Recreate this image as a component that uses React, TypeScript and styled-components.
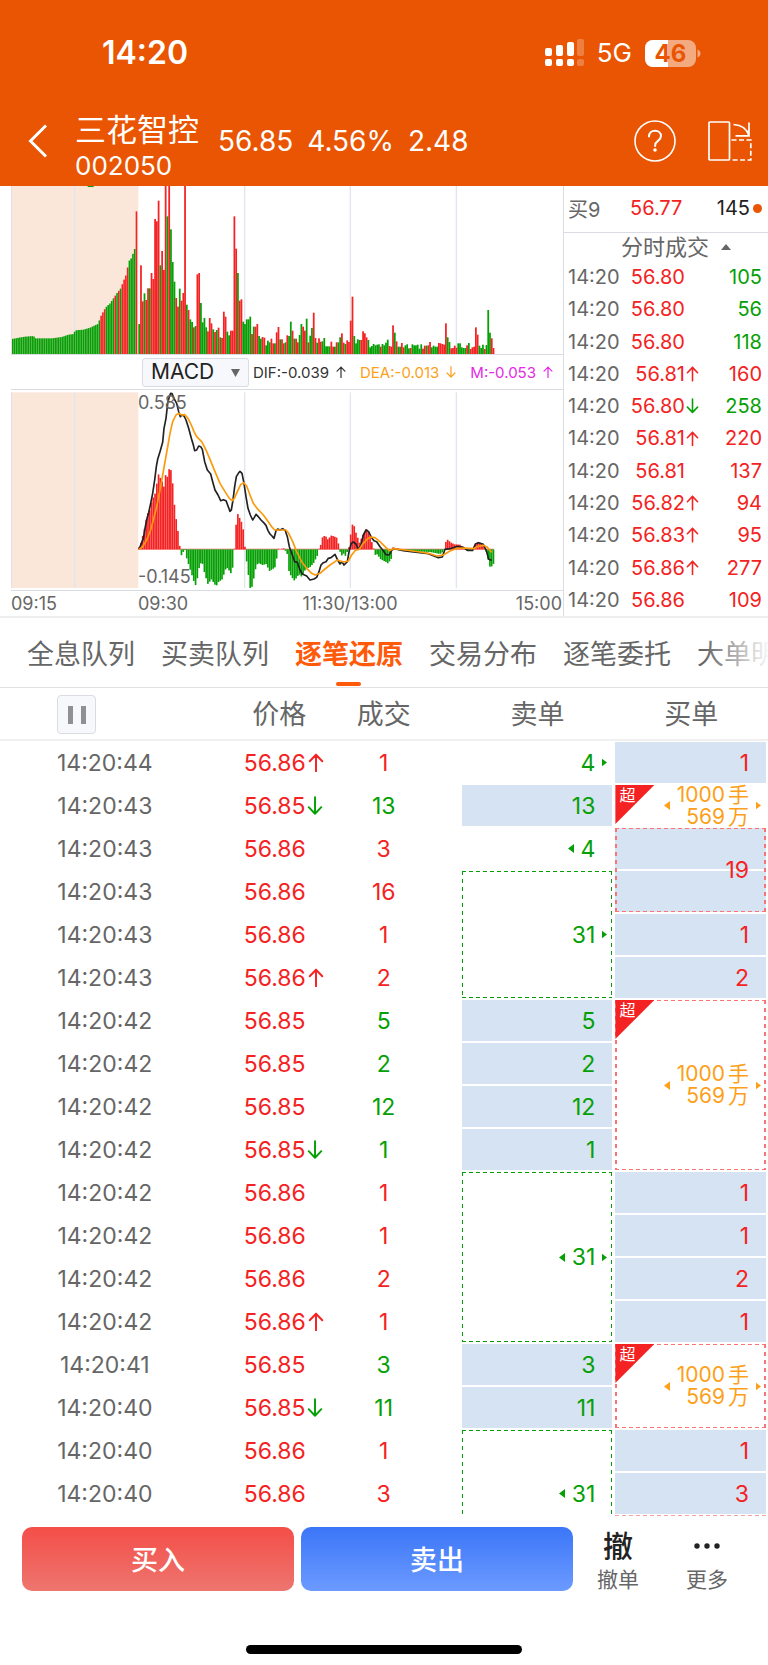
import React from "react";
import styled, { createGlobalStyle, css } from "styled-components";

const RED = "#f42222";
const GREEN = "#06a006";
const AMBER = "#fd9f18";
const BRAND = "#e95503";
const CELL = "#d6e3f3";
const LINE = "#dadce3";
const ROW = 43;

const GlobalStyle = createGlobalStyle`
  *, *::before, *::after { box-sizing: border-box; }
  body {
    margin: 0;
    background: #fff;
    color: #666;
    font-family: Inter, "Noto Sans CJK SC", sans-serif;
  }
  button, select { font: inherit; color: inherit; }
  h1, h2, p { margin: 0; font-weight: 400; }
  table { border-collapse: collapse; border-spacing: 0; }
  th, td { padding: 0; font-weight: 400; }
`;

/* ---------- header ---------- */

const Header = styled.header`
  background: ${BRAND};
  color: #fff;
  padding-bottom: 8px;
`;

const StatusBar = styled.div`
  display: flex;
  justify-content: space-between;
  align-items: center;
  height: 104px;
  padding: 2px 67px 0 102px;
`;

const Clock = styled.time`
  font-size: 32px;
  font-weight: 600;
  line-height: 40px;
`;

const StatusIcons = styled.div`
  display: flex;
  align-items: center;
  gap: 13px;
`;

const Network = styled.span`
  font-size: 26px;
  line-height: 28px;
`;

const TitleBar = styled.div`
  display: flex;
  align-items: center;
  height: 74px;
  padding: 0 16px 0 28px;
`;

const IconButton = styled.button`
  display: flex;
  padding: 0;
  border: 0;
  background: none;
  cursor: pointer;
`;

const StockName = styled.div`
  margin: 0 19px 0 27px;
`;

const Name = styled.h1`
  font-size: 31px;
  line-height: 50px;
`;

const Code = styled.p`
  font-size: 26px;
  line-height: 22px;
`;

const Quote = styled.div`
  display: flex;
  gap: 14px;
  font-size: 28px;
  line-height: 34px;
`;

const Actions = styled.div`
  display: flex;
  align-items: center;
  gap: 32px;
  margin-left: auto;
`;

/* ---------- charts ---------- */

const Market = styled.section`
  display: grid;
  grid-template-columns: minmax(0, 563fr) minmax(0, 205fr);
  border-bottom: 2px solid #eeeeef;
`;

const Charts = styled.div`
  display: flex;
  flex-direction: column;
  padding-left: 11px;
`;

const Plot = styled.div`
  position: relative;
  border-bottom: 1px solid ${LINE};

  svg { display: block; width: 100%; }
`;

const IndicatorBar = styled.div`
  display: flex;
  align-items: center;
  height: 35px;
  padding: 0 10px 0 131px;
  border-bottom: 1px solid ${LINE};
  font-size: 15px;
  white-space: nowrap;
`;

const SelectWrap = styled.label`
  position: relative;
  flex: none;
  margin-right: 4px;

  svg { position: absolute; right: 9px; top: 11px; pointer-events: none; }
`;

const IndicatorSelect = styled.select`
  appearance: none;
  display: block;
  width: 107px;
  height: 29px;
  padding: 0 8px;
  border: 1px solid ${LINE};
  border-radius: 3px;
  background: #f7f8fb;
  color: #222;
  font-size: 21px;
  line-height: 24px;
`;

const Readings = styled.div`
  display: flex;
  flex: 1;
  justify-content: space-between;
`;

const Reading = styled.span<{ $color: string }>`
  display: flex;
  align-items: center;
  gap: 7px;
  color: ${(p) => p.$color};
`;

const AxisValue = styled.span<{ $edge: "top" | "bottom" }>`
  position: absolute;
  left: 23%;
  ${(p) => p.$edge}: 3px;
  font-size: 18px;
  line-height: 20px;
`;

const TimeAxis = styled.div`
  display: grid;
  grid-template-columns: 127fr 424fr;
  padding-right: 1px;
  font-size: 18px;
  line-height: 25px;
`;

const Session = styled.div`
  display: grid;
  grid-template-columns: 1fr auto 1fr;

  span:last-child { text-align: right; }
`;

/* ---------- trade tape ---------- */

const Tape = styled.aside`
  display: flex;
  flex-direction: column;
  border-left: 1px solid ${LINE};
`;

const Level = styled.div`
  display: grid;
  grid-template-columns: 59px 1fr auto 9px;
  align-items: center;
  column-gap: 3px;
  height: 47px;
  padding: 0 6px 2px 4px;
  border-bottom: 1px solid ${LINE};
  font-size: 20px;
`;

const Up = styled.span`
  color: ${RED};
`;

const Strong = styled.span`
  color: #222;
`;

const Dot = styled.i`
  width: 9px;
  height: 9px;
  border-radius: 50%;
  background: ${BRAND};
`;

const TapeTitle = styled.h2`
  display: flex;
  align-items: center;
  justify-content: center;
  gap: 12px;
  height: 28px;
  padding-left: 20px;
  font-size: 22px;
  line-height: 28px;
`;

const TapeTable = styled.table`
  flex: 1;
  width: 100%;
  height: 355px;
  table-layout: fixed;
  font-size: 20px;
  line-height: 24px;
`;

const TapeTime = styled.td`
  width: 59px;
  padding-left: 4px;
`;

const TapePrice = styled.td`
  width: 76px;
  color: ${RED};
`;

const TapeVolume = styled.td<{ $color: string }>`
  padding-right: 6px;
  text-align: right;
  color: ${(p) => p.$color};
`;

const PriceTag = styled.span`
  display: flex;
  align-items: center;
  justify-content: flex-end;

  svg { flex: none; width: 13px; margin-left: 1px; }
`;

/* ---------- tabs ---------- */

const Tabs = styled.nav`
  position: relative;
  display: flex;
  gap: 26px;
  height: 70px;
  padding-left: 27px;
  overflow: hidden;
  border-bottom: 1px solid #e2e2e5;

  &::after {
    content: "";
    position: absolute;
    top: 0;
    right: 0;
    bottom: 0;
    width: 64px;
    background: linear-gradient(90deg, rgba(255, 255, 255, 0), rgba(255, 255, 255, 0.95));
  }
`;

const Tab = styled.button<{ $active?: boolean }>`
  position: relative;
  flex: none;
  padding: 4px 0 0;
  border: 0;
  background: none;
  font-size: 27px;
  line-height: 36px;
  cursor: pointer;

  ${(p) =>
    p.$active &&
    css`
      color: #ff5a0a;
      font-weight: 700;

      &::after {
        content: "";
        position: absolute;
        left: 50%;
        bottom: 1px;
        width: 25px;
        height: 4px;
        margin-left: -13px;
        border-radius: 2px;
        background: #ff5a0a;
      }
    `}
`;

/* ---------- order table ---------- */

const Orders = styled.table`
  width: 100%;
  table-layout: fixed;
  font-size: 23px;

  thead tr { border-bottom: 2px solid #f0f0f0; }
  tbody tr { height: ${ROW}px; }
`;

const HeadCell = styled.th<{ $pad?: number }>`
  height: 52px;
  padding: 2px ${(p) => p.$pad ?? 0}px 0 0;
  font-size: 27px;
  line-height: 36px;
`;

const PauseButton = styled.button`
  display: flex;
  align-items: center;
  justify-content: center;
  width: 39px;
  height: 39px;
  margin-left: 57px;
  border: 1px solid ${LINE};
  border-radius: 4px;
  background: #f7f8fb;
`;

const TimeCell = styled.td`
  text-align: center;
`;

const PriceCell = styled.td`
  color: ${RED};
`;

const PriceBox = styled.div`
  display: flex;
  align-items: center;
  margin-left: 34px;

  svg { flex: none; width: 16px; margin-left: 2px; }
`;

const VolumeCell = styled.td<{ $color: string }>`
  padding-right: 42px;
  text-align: center;
  color: ${(p) => p.$color};
`;

const dashes = (color: string, side: number) => css`
  background-image:
    repeating-linear-gradient(90deg, ${color} 0 4px, transparent 4px 7px),
    repeating-linear-gradient(90deg, ${color} 0 4px, transparent 4px 7px),
    repeating-linear-gradient(180deg, ${color} 0 4px, transparent 4px 8px),
    repeating-linear-gradient(180deg, ${color} 0 4px, transparent 4px 8px),
    var(--fill);
  background-size: 100% 1px, 100% 1px, ${side}px 100%, ${side}px 100%, 100% 100%;
  background-position: top, bottom, left, right, center;
  background-repeat: no-repeat;
`;

type Look = "plain" | "fill" | "frame" | "frameFill" | "open";
type Side = "sell" | "buy";

const Block = styled.div<{ $look: Look; $side: Side; $span: number }>`
  --fill: linear-gradient(transparent, transparent);
  position: relative;
  display: flex;
  align-items: center;
  justify-content: flex-end;
  gap: 7px;
  height: ${(p) => p.$span * ROW - 2}px;
  margin: 1px 2px 1px 1px;
  padding-right: 5px;
  color: ${(p) => (p.$side === "sell" ? GREEN : RED)};
  line-height: 28px;

  ${(p) => p.$look === "fill" && css`background: ${CELL};`}
  ${(p) =>
    p.$look === "frameFill" &&
    css`
      --fill: repeating-linear-gradient(${CELL} 0 ${ROW - 2}px, #fff ${ROW - 2}px ${ROW}px);
    `}
  ${(p) =>
    (p.$look === "frame" || p.$look === "frameFill" || p.$look === "open") &&
    (p.$side === "sell" ? dashes(GREEN, 1) : dashes("#f97474", 2))}
  ${(p) =>
    p.$look === "open" &&
    css`
      height: ${p.$span * ROW - 1}px;
      margin-bottom: 0;
      padding-top: ${ROW - 1}px;
      background-size: 100% 1px, 0 0, 1px 100%, 1px 100%, 100% 100%;
    `}
`;

const Slot = styled.span`
  display: flex;
  width: 5px;
`;

const BigOrder = styled.span`
  color: ${AMBER};
  font-size: 21px;
  line-height: 22px;
  text-align: right;
`;

const Unit = styled.span`
  margin-left: 3px;
`;

const Corner = styled.span`
  position: absolute;
  left: 0;
  top: 0;
  width: 39px;
  height: 39px;
  padding-left: 4px;
  background: ${RED};
  clip-path: polygon(0 0, 100% 0, 0 100%);
  color: #fff;
  font-size: 16px;
  line-height: 21px;
`;

const TailEdge = styled.div`
  height: 1px;
  margin: 0 2px 0 1px;
  background: repeating-linear-gradient(90deg, #fa9f9f 0 4px, transparent 4px 7px);
`;

/* ---------- footer ---------- */

const Footer = styled.footer`
  display: grid;
  grid-template-columns: 272fr 272fr 76fr 88fr;
  column-gap: 7px;
  padding: 11px 17px 0 22px;
`;

const TradeButton = styled.button<{ $side: Side }>`
  height: 64px;
  padding: 0 0 2px;
  border: 0;
  border-radius: 10px;
  background: ${(p) =>
    p.$side === "buy" ? "linear-gradient(#f44e48, #ee756f)" : "linear-gradient(#3b76f8, #6c9aff)"};
  color: #fff;
  font-size: 27px;
  font-weight: 500;
  cursor: pointer;
`;

const ToolButton = styled.button`
  display: flex;
  flex-direction: column;
  align-items: center;
  padding: 0;
  border: 0;
  background: none;
  font-size: 21px;
  line-height: 30px;
  cursor: pointer;
`;

const ToolIcon = styled.span`
  display: flex;
  align-items: center;
  height: 38px;
  color: #222;
  font-size: 30px;
  font-weight: 500;
`;

const HomeBar = styled.div`
  width: 36%;
  height: 9px;
  margin: 50px auto 14px;
  border-radius: 5px;
  background: #000;
`;

/* ---------- data ---------- */

type Point = [number, number];

function sample(points: Point[], x: number): number {
  for (let i = 1; i < points.length; i++) {
    const [x1, y1] = points[i];
    const [x0, y0] = points[i - 1];
    if (x <= x1) return y0 + ((y1 - y0) * (x - x0)) / (x1 - x0);
  }
  return points[points.length - 1][1];
}

const STEP = 5.288;
const OPEN_X = 415;

const VOLUMES =
  "g90 r266 r158 g182 r162 r197 g197 r243 r225 r405 r398 r460 g266 r309 r252 r505 g413 r505 g374 g276 g217 r168 r142 g196 r160 r183 r505 g148 r132 g104 g96 r80 g84 r239 r243 g153 g95 g108 g80 r68 r108 r92 g74 r66 g72 r79 g50 r48 r127 r112 g67 g56 r70 r70 r413 r316 g243 r160 r164 g97 g90 g104 g104 g112 r60 g82 r82 r90 g54 g46 r51 r49 g26 g40 g35 r46 r32 g32 r65 r81 g44 r44 r32 g35 r56 g54 g97 r70 g46 r46 r35 g57 g90 r82 r70 g106 r35 g55 g78 r124 r48 g34 r47 r37 g38 g48 g23 g23 g23 r37 r22 g22 r35 g35 g50 r62 r34 g30 r41 r36 r100 r172 g54 g32 g44 g42 r42 r68 r62 r50 g42 g20 g24 g30 g26 g28 g29 r22 g30 g26 g34 g43 r24 r22 r86 g64 r38 g22 g22 r33 r20 g26 g29 g17 r18 g29 g26 g26 g28 g16 g29 r16 r25 g25 r26 r36 g20 g25 g22 g22 r33 r32 r30 r28 r92 g50 g36 r17 r18 r25 r19 g32 g32 g20 g18 g18 r26 g33 r15 r20 r22 r80 r58 g25 g18 g28 r15 g27 g132 g64 r47 r18".split(
    " ",
  );

const AUCTION: Point[] = [
  [36, 45], [62, 50], [75, 52], [100, 54], [107, 47], [155, 47], [185, 51], [205, 58], [221, 60], [225, 71],
  [250, 73], [270, 79], [295, 91], [300, 109], [312, 132], [318, 141], [330, 152], [350, 182], [362, 197],
  [374, 229], [380, 241], [385, 278], [392, 284], [397, 296], [403, 315],
];
const AUCTION_RED = new Set([50, 51, 52, 58, 60, 62, 63, 64, 65, 70]);

const HISTOGRAM: Point[] = [
  [415, 3], [422, 18], [427, 38], [433, 62], [438, 88], [443, 108], [449, 118], [454, 140], [459, 155], [465, 168],
  [470, 198], [475, 225], [480, 215], [486, 203], [491, 188], [496, 223], [501, 215], [507, 241], [512, 239],
  [517, 204], [522, 140], [528, 91], [533, 58], [539, 7], [544, -18], [549, -8], [554, 0], [560, -28], [570, -60],
  [581, -95], [586, -108], [592, -85], [597, -55], [602, -42], [607, -42], [613, -70], [623, -104], [634, -90],
  [645, -107], [650, -108], [655, -98], [666, -90], [677, -58], [682, -56], [693, -73], [698, -52], [703, 7],
  [708, 76], [713, 106], [724, 82], [729, 60], [734, 10], [740, -40], [750, -116], [756, -112], [766, -60],
  [771, -45], [777, -42], [787, -47], [798, -44], [808, -65], [824, -55], [830, -25], [835, 3], [840, 0], [851, 3],
  [861, -12], [867, -70], [878, -88], [883, -94], [894, -78], [899, -76], [904, -82], [915, -62], [931, -52],
  [941, -40], [952, -18], [957, 4], [962, 14], [967, 36], [972, 40], [978, 38], [983, 30], [994, 42], [1010, 35],
  [1015, 16], [1020, -8], [1026, -20], [1031, -12], [1036, -20], [1041, -8], [1047, 8], [1052, 48], [1057, 75],
  [1062, 70], [1068, 48], [1078, 20], [1089, 44], [1100, 62], [1110, 40], [1116, 18], [1121, 0], [1126, -18],
  [1131, -15], [1142, -30], [1158, -38], [1163, -42], [1173, -30], [1178, 6], [1190, 3], [1210, -1], [1230, -4],
  [1260, -7], [1290, -8], [1320, -14], [1328, -8], [1333, 0], [1337, 22], [1342, 29], [1353, 20], [1363, 15],
  [1380, 14], [1390, 5], [1400, -3], [1415, -4], [1420, 0], [1426, 16], [1431, 22], [1442, 18], [1453, 3],
  [1458, -5], [1463, -25], [1468, -52], [1474, -52], [1481, -42],
];

const DIF =
  "417,508 423,493 430,475 436,440 441,415 446,398 452,370 458,340 464,300 469,260 473,238 480,215 488,187 492,145 498,115 503,70 508,50 512,40 516,41 522,55 530,70 536,95 541,110 546,105 552,108 558,120 566,145 574,175 580,195 584,212 590,210 596,198 602,200 607,208 614,245 622,270 632,282 638,305 645,330 654,345 662,362 670,359 678,362 684,378 690,394 694,390 699,360 704,320 709,290 715,280 720,274 726,280 732,310 738,350 744,385 751,405 758,420 763,412 768,403 775,410 783,420 791,428 798,436 804,452 810,462 816,468 822,475 828,452 833,447 840,450 848,446 856,452 862,470 868,500 878,528 884,545 892,547 900,570 907,582 920,588 930,600 942,597 950,592 957,575 963,555 970,548 978,545 985,535 993,533 1005,523 1012,538 1020,552 1026,545 1032,555 1042,545 1048,510 1054,490 1060,486 1068,492 1075,508 1082,498 1090,465 1098,450 1106,455 1114,472 1122,482 1130,485 1140,500 1150,512 1158,524 1168,525 1174,512 1182,506 1210,512 1240,516 1260,518 1285,521 1300,527 1315,533 1327,531 1335,508 1355,505 1372,499 1390,502 1402,511 1418,511 1426,492 1436,488 1450,493 1460,515 1466,538 1475,541";

const DEA =
  "417,508 428,500 440,480 452,450 460,420 470,380 480,330 488,285 496,240 504,195 510,160 518,125 528,105 536,100 545,105 554,104 564,115 574,135 582,155 590,170 605,185 618,210 630,238 645,275 660,310 675,335 688,355 697,362 703,355 712,335 722,314 731,308 740,318 750,345 760,370 772,386 790,405 805,425 815,440 824,450 840,450 858,450 866,460 878,485 890,515 905,545 920,565 935,580 945,585 960,580 975,567 990,555 1005,545 1012,540 1030,546 1045,543 1055,525 1065,512 1078,507 1090,490 1102,477 1112,471 1125,473 1140,485 1155,500 1168,512 1180,506 1215,510 1260,516 1290,521 1310,528 1330,525 1350,513 1372,505 1395,504 1420,506 1435,499 1450,496 1460,500 1475,517";

type Move = "up" | "down";
type Trade = { price: string; volume: number; color: string; move?: Move };

const TAPE: Trade[] = [
  { price: "56.80", volume: 105, color: GREEN },
  { price: "56.80", volume: 56, color: GREEN },
  { price: "56.80", volume: 118, color: GREEN },
  { price: "56.81", volume: 160, color: RED, move: "up" },
  { price: "56.80", volume: 258, color: GREEN, move: "down" },
  { price: "56.81", volume: 220, color: RED, move: "up" },
  { price: "56.81", volume: 137, color: RED },
  { price: "56.82", volume: 94, color: RED, move: "up" },
  { price: "56.83", volume: 95, color: RED, move: "up" },
  { price: "56.86", volume: 277, color: RED, move: "up" },
  { price: "56.86", volume: 109, color: RED },
];

type Order = { look: Look; span?: number; value?: number; left?: boolean; right?: boolean };
type Row = Trade & { time: string; sell?: Order; buy?: Order };

const fill = (value: number): Order => ({ look: "fill", value });

const ROWS: Row[] = [
  { time: "14:20:44", price: "56.86", move: "up", volume: 1, color: RED, sell: { look: "plain", value: 4, right: true }, buy: fill(1) },
  { time: "14:20:43", price: "56.85", move: "down", volume: 13, color: GREEN, sell: fill(13), buy: { look: "plain", left: true, right: true } },
  { time: "14:20:43", price: "56.86", volume: 3, color: RED, sell: { look: "plain", value: 4, left: true }, buy: { look: "frameFill", span: 2, value: 19 } },
  { time: "14:20:43", price: "56.86", volume: 16, color: RED, sell: { look: "frame", span: 3, value: 31, right: true } },
  { time: "14:20:43", price: "56.86", volume: 1, color: RED, buy: fill(1) },
  { time: "14:20:43", price: "56.86", move: "up", volume: 2, color: RED, buy: fill(2) },
  { time: "14:20:42", price: "56.85", volume: 5, color: GREEN, sell: fill(5), buy: { look: "frame", span: 4, left: true, right: true } },
  { time: "14:20:42", price: "56.85", volume: 2, color: GREEN, sell: fill(2) },
  { time: "14:20:42", price: "56.85", volume: 12, color: GREEN, sell: fill(12) },
  { time: "14:20:42", price: "56.85", move: "down", volume: 1, color: GREEN, sell: fill(1) },
  { time: "14:20:42", price: "56.86", volume: 1, color: RED, sell: { look: "frame", span: 4, value: 31, left: true, right: true }, buy: fill(1) },
  { time: "14:20:42", price: "56.86", volume: 1, color: RED, buy: fill(1) },
  { time: "14:20:42", price: "56.86", volume: 2, color: RED, buy: fill(2) },
  { time: "14:20:42", price: "56.86", move: "up", volume: 1, color: RED, buy: fill(1) },
  { time: "14:20:41", price: "56.85", volume: 3, color: GREEN, sell: fill(3), buy: { look: "frame", span: 2, left: true, right: true } },
  { time: "14:20:40", price: "56.85", move: "down", volume: 11, color: GREEN, sell: fill(11) },
  { time: "14:20:40", price: "56.86", volume: 1, color: RED, sell: { look: "open", span: 2, value: 31, left: true }, buy: fill(1) },
  { time: "14:20:40", price: "56.86", volume: 3, color: RED, buy: fill(3) },
];

/* ---------- small drawings ---------- */

const Arrow = ({ move, width = 12, color }: { move: Move; width?: number; color?: string }) => (
  <svg
    width={width}
    viewBox="0 0 14 17"
    fill="none"
    stroke={color ?? (move === "up" ? RED : GREEN)}
    strokeWidth="1.7"
    strokeLinecap="round"
    strokeLinejoin="round"
    aria-hidden="true"
  >
    <path d={move === "up" ? "M7 16V1.500M1.500 7.200L7 1.500l5.500 5.700" : "M7 1v14.500M1.500 9.800L7 15.500l5.500-5.700"} />
  </svg>
);

const Triangle = ({ dir, color }: { dir: "left" | "right"; color: string }) => (
  <svg width="6" height="9" viewBox="0 0 6 9" fill={color} aria-hidden="true">
    <path d={dir === "left" ? "M6 0v9L0 4.500z" : "M0 0v9l6-4.500z"} />
  </svg>
);

const Signal = () => (
  <svg width="39" height="28" viewBox="0 0 39 28" fill="#fff" aria-hidden="true">
    <rect x="0" y="9" width="7" height="8" rx="2" />
    <rect x="11" y="6" width="7" height="11" rx="2" />
    <rect x="22" y="3" width="7" height="14" rx="2" />
    <rect x="32" y="0" width="7" height="17" rx="2" opacity=".25" />
    <rect x="0" y="20" width="7" height="7" rx="2" />
    <rect x="11" y="20" width="7" height="7" rx="2" />
    <rect x="22" y="20" width="7" height="7" rx="2" />
    <rect x="32" y="20" width="7" height="7" rx="2" opacity=".25" />
  </svg>
);

const Battery = () => (
  <svg width="56" height="27" viewBox="0 0 56 27" aria-label="46%">
    <clipPath id="charge">
      <rect width="23" height="27" />
    </clipPath>
    <rect width="51" height="27" rx="8" fill="#fff" opacity=".5" />
    <rect width="51" height="27" rx="8" fill="#fff" clipPath="url(#charge)" />
    <path d="M52.500 9.500c4 1.500 4 6.500 0 8z" fill="#fff" opacity=".5" />
    <text x="25.500" y="22" fontSize="24" fontWeight="700" fill={BRAND} textAnchor="middle">
      46
    </text>
  </svg>
);

const Help = () => (
  <svg width="42" height="42" viewBox="0 0 42 42" fill="none" stroke="#fff" strokeWidth="1.6" aria-hidden="true">
    <circle cx="21" cy="21" r="20" />
    <path d="M15 16.500c0-3.600 2.600-5.700 6-5.700s6 2.200 6 5.300c0 4.600-5.800 4.900-5.800 9v.8" strokeWidth="2" strokeLinecap="round" />
    <circle cx="21" cy="30" r="1.800" fill="#fff" stroke="none" />
  </svg>
);

const Rotate = () => (
  <svg width="44" height="40" viewBox="0 0 44 40" fill="none" stroke="#fff" strokeWidth="1.700" aria-hidden="true">
    <rect x="1" y="1" width="20.500" height="38" rx="1" />
    <path d="M25.500 3.500C34 4 39 8 41 14.500M41 1.500v13.300H27.500" />
    <path d="M23.500 19H42.800V39H23.500" strokeDasharray="5 2.500" />
  </svg>
);

const Grid = ({ y, height }: { y: number; height: number }) => (
  <>
    <rect x="33" y={y} width="382" height={height} fill="#fbe6da" />
    {[223, 733, 1050, 1368].map((x) => (
      <rect key={x} x={x - 1} y={y} width="4" height={height} fill="#e1e6ee" />
    ))}
    <rect x="33" y={y} width="2" height={height} fill="#dadce3" />
  </>
);

const VolumeChart = () => (
  <svg height="168" viewBox="33 18 1656 504" preserveAspectRatio="none" role="img" aria-label="成交量">
    <Grid y={18} height={504} />
    <rect x="263" y="18" width="18" height="3" fill={GREEN} />
    {Array.from({ length: 71 }, (_, i) => {
      const h = i === 70 ? 428 : sample(AUCTION, 38 + i * 5.3);
      return (
        <rect key={i} x={36 + i * 5.3} y={522 - h} width="4.800" height={h} fill={AUCTION_RED.has(i) ? RED : GREEN} />
      );
    })}
    {VOLUMES.map((v, i) => {
      const h = Number(v.slice(1));
      return (
        <rect key={i} x={OPEN_X + i * STEP} y={522 - h} width={STEP} height={h} fill={v[0] === "r" ? RED : GREEN} />
      );
    })}
  </svg>
);

const MacdChart = () => (
  <svg height="200" viewBox="33 30 1656 600" preserveAspectRatio="none" role="img" aria-label="MACD">
    <Grid y={37} height={587} />
    <rect x={OPEN_X} y="506" width="1065" height="3" fill={RED} opacity=".6" />
    {VOLUMES.map((_, i) => {
      const h = sample(HISTOGRAM, OPEN_X + 2 + i * STEP);
      return (
        <rect
          key={i}
          x={OPEN_X + i * STEP}
          y={h > 0 ? 508 - h : 508}
          width="5"
          height={Math.abs(h)}
          fill={h > 0 ? RED : GREEN}
        />
      );
    })}
    <polyline points={DIF} fill="none" stroke="#222" strokeWidth="5" strokeLinejoin="round" />
    <polyline points={DEA} fill="none" stroke="#fc9a0c" strokeWidth="5" strokeLinejoin="round" />
  </svg>
);

const OrderCell = ({ order, side }: { order: Order; side: Side }) => {
  const big = order.value === undefined;
  const color = big ? AMBER : side === "sell" ? GREEN : RED;
  const span = order.span ?? 1;
  return (
    <td rowSpan={span}>
      <Block $look={order.look} $side={side} $span={span}>
        {big && <Corner>超</Corner>}
        {order.left && <Triangle dir="left" color={color} />}
        {big ? (
          <BigOrder>
            1000<Unit>手</Unit>
            <br />
            569<Unit>万</Unit>
          </BigOrder>
        ) : (
          <span>{order.value}</span>
        )}
        <Slot>{order.right && <Triangle dir="right" color={color} />}</Slot>
      </Block>
    </td>
  );
};

const TABS = ["全息队列", "买卖队列", "逐笔还原", "交易分布", "逐笔委托", "大单明细"];

export default function App() {
  return (
    <>
      <GlobalStyle />
      <Header>
        <StatusBar>
          <Clock>14:20</Clock>
          <StatusIcons>
            <Signal />
            <Network>5G</Network>
            <Battery />
          </StatusIcons>
        </StatusBar>
        <TitleBar>
          <IconButton aria-label="返回">
            <svg width="20" height="34" viewBox="0 0 20 34" fill="none" stroke="#fff" strokeWidth="3">
              <path d="M18 1.500L2.500 17L18 32.500" />
            </svg>
          </IconButton>
          <StockName>
            <Name>三花智控</Name>
            <Code>002050</Code>
          </StockName>
          <Quote>
            <span>56.85</span>
            <span>4.56%</span>
            <span>2.48</span>
          </Quote>
          <Actions>
            <IconButton aria-label="帮助">
              <Help />
            </IconButton>
            <IconButton aria-label="横屏">
              <Rotate />
            </IconButton>
          </Actions>
        </TitleBar>
      </Header>

      <main>
        <Market>
          <Charts>
            <Plot>
              <VolumeChart />
            </Plot>
            <IndicatorBar>
              <SelectWrap>
                <IndicatorSelect aria-label="指标" defaultValue="MACD">
                  <option>MACD</option>
                </IndicatorSelect>
                <svg width="9" height="8" viewBox="0 0 9 8" fill="#666">
                  <path d="M0 0h9L4.500 8z" />
                </svg>
              </SelectWrap>
              <Readings>
                <Reading $color="#333">
                  DIF:-0.039
                  <Arrow move="up" width={10} color="#333" />
                </Reading>
                <Reading $color={AMBER}>
                  DEA:-0.013
                  <Arrow move="down" width={10} color={AMBER} />
                </Reading>
                <Reading $color="#e32be3">
                  M:-0.053
                  <Arrow move="up" width={10} color="#e32be3" />
                </Reading>
              </Readings>
            </IndicatorBar>
            <Plot>
              <MacdChart />
              <AxisValue $edge="top">0.585</AxisValue>
              <AxisValue $edge="bottom">-0.145</AxisValue>
            </Plot>
            <TimeAxis>
              <span>09:15</span>
              <Session>
                <span>09:30</span>
                <span>11:30/13:00</span>
                <span>15:00</span>
              </Session>
            </TimeAxis>
          </Charts>

          <Tape>
            <Level>
              <span>买9</span>
              <Up>56.77</Up>
              <Strong>145</Strong>
              <Dot />
            </Level>
            <TapeTitle>
              分时成交
              <svg width="10" height="6" viewBox="0 0 10 6" fill="#666">
                <path d="M0 6h10L5 0z" />
              </svg>
            </TapeTitle>
            <TapeTable>
              <tbody>
                {TAPE.map((t, i) => (
                  <tr key={i}>
                    <TapeTime>14:20</TapeTime>
                    <TapePrice>
                      <PriceTag>
                        {t.price}
                        {t.move ? <Arrow move={t.move} /> : <svg viewBox="0 0 14 17" />}
                      </PriceTag>
                    </TapePrice>
                    <TapeVolume $color={t.color}>{t.volume}</TapeVolume>
                  </tr>
                ))}
              </tbody>
            </TapeTable>
          </Tape>
        </Market>

        <Tabs>
          {TABS.map((t) => (
            <Tab key={t} $active={t === "逐笔还原"}>
              {t}
            </Tab>
          ))}
        </Tabs>

        <Orders>
          <colgroup>
            <col style={{ width: "27.3%" }} />
            <col style={{ width: "18.1%" }} />
            <col style={{ width: "14.6%" }} />
            <col style={{ width: "20%" }} />
            <col style={{ width: "20%" }} />
          </colgroup>
          <thead>
            <tr>
              <HeadCell>
                <PauseButton aria-label="暂停">
                  <svg width="20" height="18" viewBox="0 0 20 18" fill="#8f9096">
                    <path d="M1 0h5v18H1zM14 0h5v18h-5z" />
                  </svg>
                </PauseButton>
              </HeadCell>
              <HeadCell>价格</HeadCell>
              <HeadCell $pad={42}>成交</HeadCell>
              <HeadCell>卖单</HeadCell>
              <HeadCell>买单</HeadCell>
            </tr>
          </thead>
          <tbody>
            {ROWS.map((r, i) => (
              <tr key={i}>
                <TimeCell>{r.time}</TimeCell>
                <PriceCell>
                  <PriceBox>
                    {r.price}
                    {r.move && <Arrow move={r.move} />}
                  </PriceBox>
                </PriceCell>
                <VolumeCell $color={r.color}>{r.volume}</VolumeCell>
                {r.sell && <OrderCell order={r.sell} side="sell" />}
                {r.buy && <OrderCell order={r.buy} side="buy" />}
              </tr>
            ))}
          </tbody>
          <tfoot>
            <tr>
              <td colSpan={4} />
              <td>
                <TailEdge />
              </td>
            </tr>
          </tfoot>
        </Orders>
      </main>

      <Footer>
        <TradeButton $side="buy">买入</TradeButton>
        <TradeButton $side="sell">卖出</TradeButton>
        <ToolButton>
          <ToolIcon>撤</ToolIcon>
          撤单
        </ToolButton>
        <ToolButton>
          <ToolIcon>
            <svg width="26" height="6" viewBox="0 0 26 6" fill="#222">
              <circle cx="3" cy="3" r="2.700" />
              <circle cx="13" cy="3" r="2.700" />
              <circle cx="23" cy="3" r="2.700" />
            </svg>
          </ToolIcon>
          更多
        </ToolButton>
      </Footer>
      <HomeBar />
    </>
  );
}
